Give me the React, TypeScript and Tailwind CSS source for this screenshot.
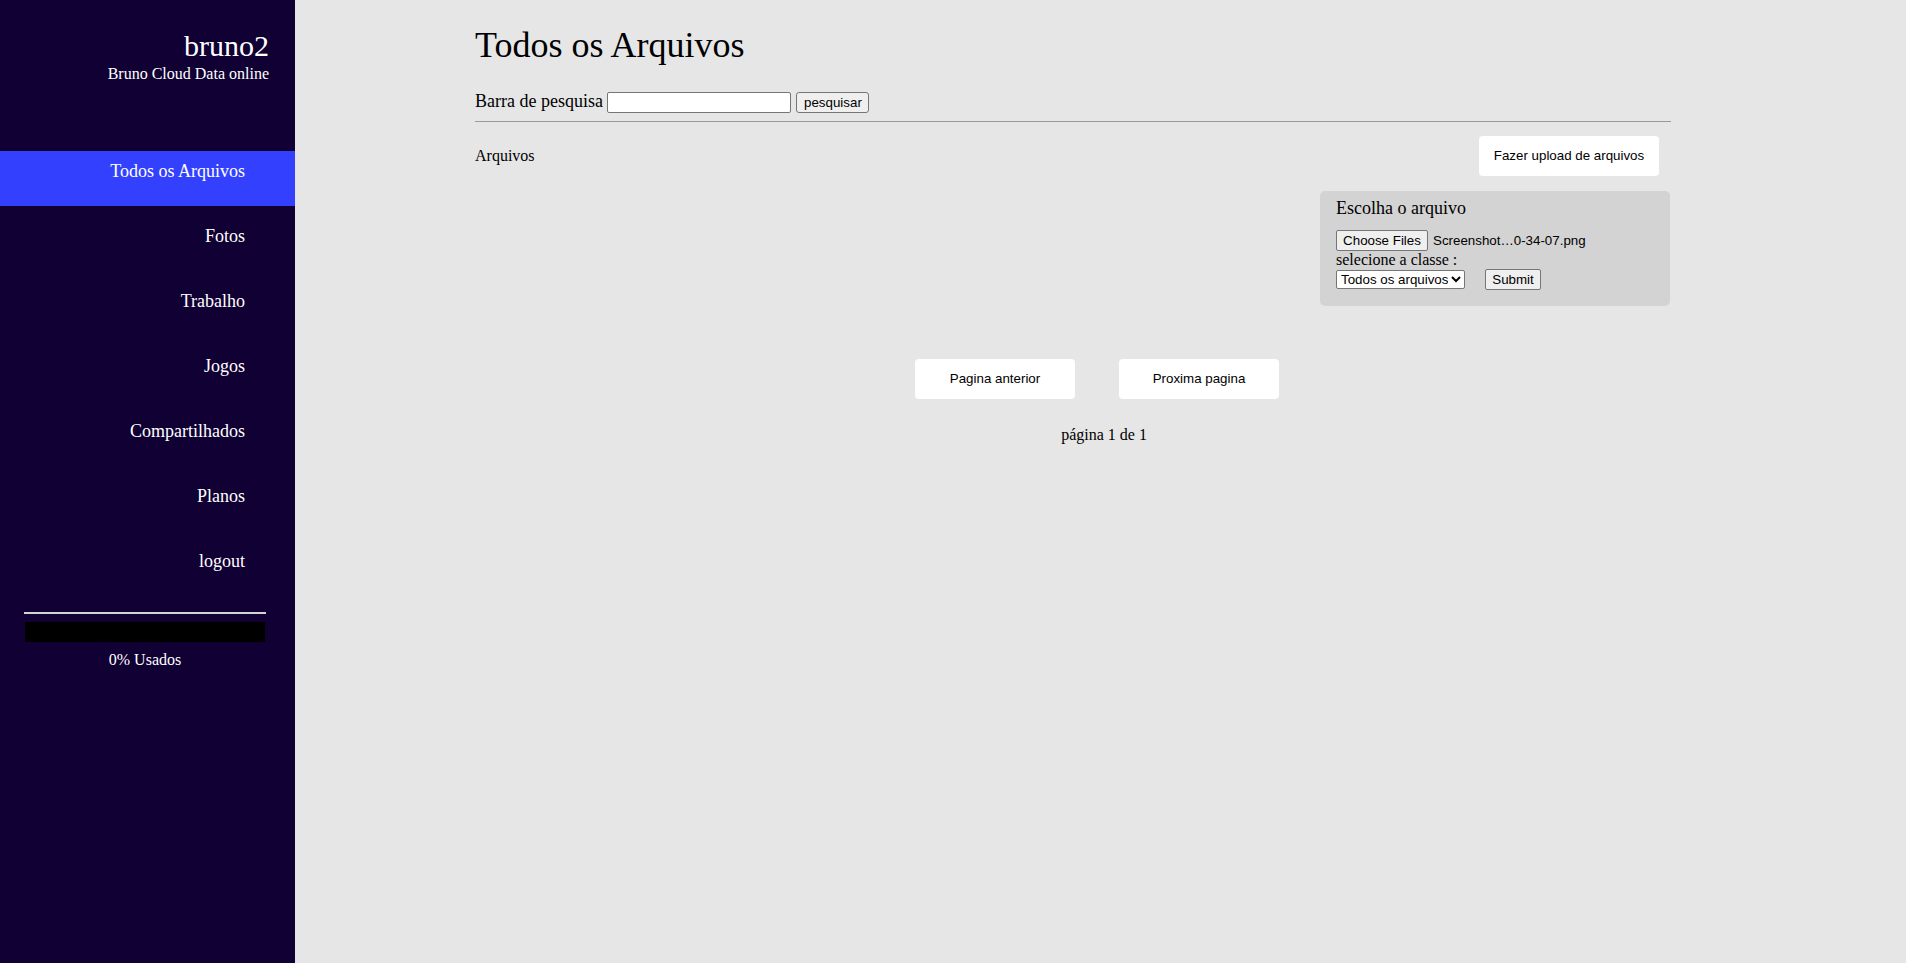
import React from "react";

const navItems = [
  { label: "Todos os Arquivos", active: true },
  { label: "Fotos" },
  { label: "Trabalho" },
  { label: "Jogos" },
  { label: "Compartilhados" },
  { label: "Planos" },
  { label: "logout" },
];

const sans = "font-['Liberation_Sans',Arial,sans-serif] text-[13.33px]";

export default function App() {
  return (
    <div className="flex min-h-screen bg-[#e6e6e6] font-['Liberation_Serif','Times_New_Roman',serif] text-black">
      <aside className="w-[295px] shrink-0 bg-[#100033] pt-[31px] text-white">
        <div className="pr-[26px] text-right">
          <h1 className="text-[30px] leading-[30px]">bruno2</h1>
          <p className="mt-[5px] text-[16px] leading-[16px]">Bruno Cloud Data online</p>
        </div>

        <nav className="mt-[69px]">
          {navItems.map((item) => (
            <a
              key={item.label}
              href="#"
              className={`mb-[10px] block h-[55px] pr-[50px] pt-[11px] text-right text-[18px] leading-[18px] ${
                item.active ? "bg-[#3341ff]" : ""
              }`}
            >
              {item.label}
            </a>
          ))}
        </nav>

        <div className="ml-[24px] mt-[16px] w-[242px]">
          <div className="h-[2px] bg-[#d4d4d4]" />
          <div className="mx-px mt-[8px] h-[20px] bg-black" />
          <p className="mt-[10px] text-center text-[16px] leading-[16px]">0% Usados</p>
        </div>
      </aside>

      <main className="flex-1 pt-[27px]">
        <div className="ml-[180px] w-[1196px]">
          <h2 className="text-[36px] leading-[36px]">Todos os Arquivos</h2>

          <form className="mt-[29px] flex items-start" onSubmit={(e) => e.preventDefault()}>
            <label className="text-[18px] leading-[18px]">Barra de pesquisa</label>
            <input
              type="text"
              className={`ml-[4.5px] h-[21px] w-[184px] rounded-[2px] border border-[#767676] bg-white px-[2px] ${sans}`}
            />
            <button
              type="submit"
              className={`ml-[5px] h-[21px] w-[73px] rounded-[3px] border border-[#767676] bg-[#efefef] ${sans}`}
            >
              pesquisar
            </button>
          </form>

          <div className="mt-[8px] h-px bg-[#9a9a9a]" />

          <div className="mt-[14px] flex h-[40px] items-center justify-between">
            <span className="text-[16px] leading-[16px]">Arquivos</span>
            <button className={`mr-[12px] h-[40px] w-[180px] rounded-[4px] bg-white ${sans}`}>
              Fazer upload de arquivos
            </button>
          </div>

          <div className="ml-auto mr-px mt-[15px] h-[115px] w-[350px] rounded-[5px] bg-[#d3d3d3] pl-[16px] pt-[8px]">
            <h3 className="text-[18px] leading-[18px]">Escolha o arquivo</h3>
            <div className="mt-[13px] flex items-center">
              <button
                type="button"
                className={`h-[21px] w-[92px] rounded-[2px] border border-[#767676] bg-[#efefef] ${sans}`}
              >
                Choose Files
              </button>
              <span className={`ml-[5px] ${sans}`}>Screenshot…0-34-07.png</span>
            </div>
            <p className="mt-px text-[16px] leading-[16px]">selecione a classe :</p>
            <div className="mt-px flex items-start">
              <select
                className={`mt-px h-[19px] w-[129px] rounded-[2px] border border-[#767676] bg-white ${sans}`}
                defaultValue="todos"
              >
                <option value="todos">Todos os arquivos</option>
                <option value="fotos">Fotos</option>
                <option value="trabalho">Trabalho</option>
                <option value="jogos">Jogos</option>
              </select>
              <button
                type="button"
                className={`ml-[20px] h-[21px] w-[56px] rounded-[2px] border border-[#767676] bg-[#efefef] ${sans}`}
              >
                Submit
              </button>
            </div>
          </div>
        </div>

        <div className="mt-[53px] flex justify-center gap-[44px] pr-[7px]">
          <button className={`h-[40px] w-[160px] rounded-[4px] bg-white ${sans}`}>Pagina anterior</button>
          <button className={`h-[40px] w-[160px] rounded-[4px] bg-white ${sans}`}>Proxima pagina</button>
        </div>
        <p className="mt-[28px] pl-[7px] text-center text-[16px] leading-[16px]">página 1 de 1</p>
      </main>
    </div>
  );
}
